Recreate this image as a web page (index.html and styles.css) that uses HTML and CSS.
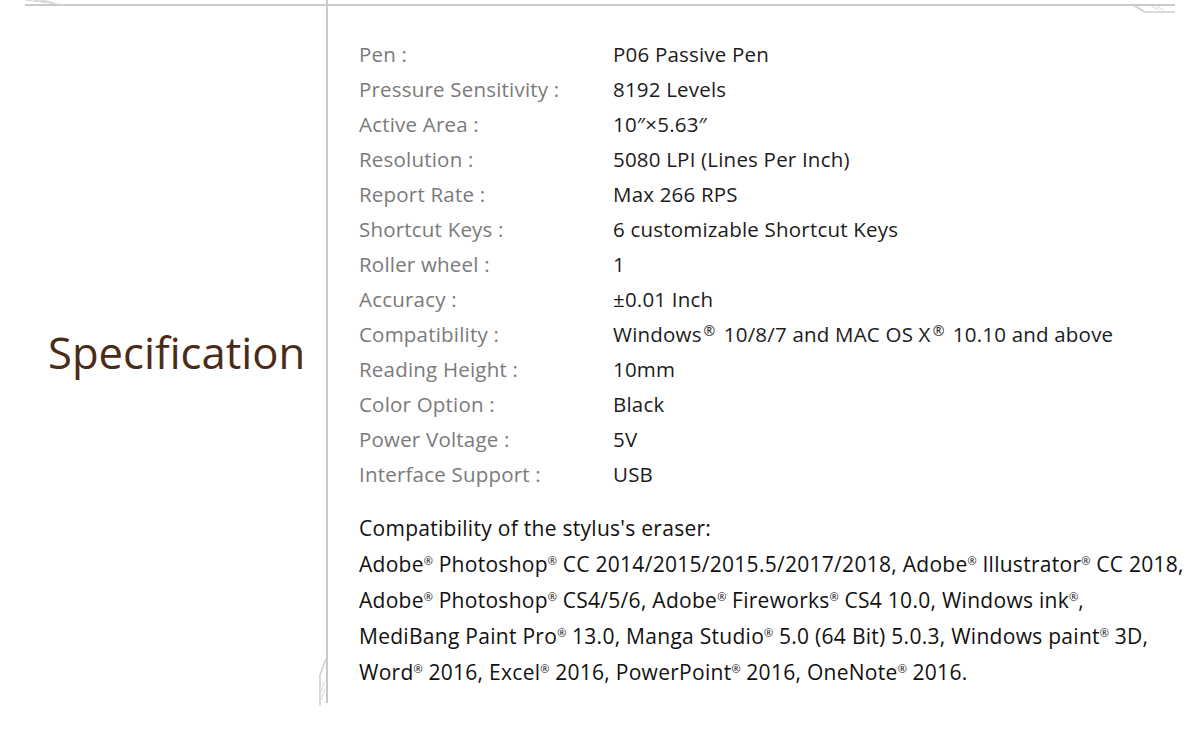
FILE: index.html
```html
<!DOCTYPE html>
<html lang="en">
<head>
<meta charset="utf-8">
<title>Specification</title>
<link rel="stylesheet" href="styles.css">
</head>
<body>
<div class="page">
  <div class="rule rule-left"></div>
  <div class="divider"></div>
  <div class="rule rule-right"></div>

  <div class="aside">
    <h1 class="title">Specification</h1>
  </div>

  <div class="content">
    <dl class="specs">
      <dt>Pen :</dt><dd>P06 Passive Pen</dd>
      <dt>Pressure Sensitivity :</dt><dd>8192 Levels</dd>
      <dt>Active Area :</dt><dd>10″×5.63″</dd>
      <dt>Resolution :</dt><dd>5080 LPI (Lines Per Inch)</dd>
      <dt>Report Rate :</dt><dd>Max 266 RPS</dd>
      <dt>Shortcut Keys :</dt><dd>6 customizable Shortcut Keys</dd>
      <dt>Roller wheel :</dt><dd>1</dd>
      <dt>Accuracy :</dt><dd>±0.01 Inch</dd>
      <dt>Compatibility :</dt><dd>Windows<sup class="reg-big">®</sup> 10/8/7 and MAC OS X<sup class="reg-big">®</sup> 10.10 and above</dd>
      <dt>Reading Height :</dt><dd>10mm</dd>
      <dt>Color Option :</dt><dd>Black</dd>
      <dt>Power Voltage :</dt><dd>5V</dd>
      <dt>Interface Support :</dt><dd>USB</dd>
    </dl>
    <p class="eraser">Compatibility of the stylus's eraser:<br>Adobe<sup class="reg">®</sup> Photoshop<sup class="reg">®</sup> CC 2014/2015/2015.5/2017/2018, Adobe<sup class="reg">®</sup> Illustrator<sup class="reg">®</sup> CC 2018,<br>Adobe<sup class="reg">®</sup> Photoshop<sup class="reg">®</sup> CS4/5/6, Adobe<sup class="reg">®</sup> Fireworks<sup class="reg">®</sup> CS4 10.0, Windows ink<sup class="reg">®</sup>,<br>MediBang Paint Pro<sup class="reg">®</sup> 13.0, Manga Studio<sup class="reg">®</sup> 5.0 (64 Bit) 5.0.3, Windows paint<sup class="reg">®</sup> 3D,<br>Word<sup class="reg">®</sup> 2016, Excel<sup class="reg">®</sup> 2016, PowerPoint<sup class="reg">®</sup> 2016, OneNote<sup class="reg">®</sup> 2016.</p>
  </div>

  <svg class="deco deco-tl" width="50" height="6" viewBox="0 0 50 6" aria-hidden="true">
    <path d="M4 0 L44 5 M12 0 L34 3 M18 0 L30 1.6" fill="none" stroke="#d6d6d6" stroke-width="1"/>
  </svg>
  <svg class="deco deco-tr" width="52" height="12" viewBox="0 0 52 12" aria-hidden="true">
    <path d="M5 1 L17 8 L47 8" fill="none" stroke="#cfcfcf" stroke-width="1.6"/>
    <path d="M22 1.5 L31 6 M27 1.5 L36 6" fill="none" stroke="#d6d6d6" stroke-width="1"/>
  </svg>
  <svg class="deco deco-bl" width="14" height="56" viewBox="0 0 14 56" aria-hidden="true">
    <path d="M6 56 V25 L12 9" fill="none" stroke="#cfcfcf" stroke-width="1.5"/>
    <path d="M7 42 L11 31 M7 50 L11 39" fill="none" stroke="#dadada" stroke-width="1"/>
  </svg>
</div>
</body>
</html>
```

FILE: styles.css
```css
html, body {
  margin: 0;
  padding: 0;
  background: #ffffff;
}

body {
  font-family: "Open Sans", "Liberation Sans", sans-serif;
}

.page {
  position: relative;
  width: 1200px;
  height: 730px;
  display: grid;
  grid-template-columns: 326px 2px 1fr;
  grid-template-rows: 4px 2px 697px;
}

.rule {
  grid-row: 2;
  background: #c9c9c9;
}

.rule-left {
  grid-column: 1;
  margin-left: 25px;
}

.rule-right {
  grid-column: 3;
  margin-right: 25px;
}

.divider {
  grid-column: 2;
  grid-row: 1 / 4;
  background: #c9c9c9;
}

.aside {
  grid-column: 1;
  grid-row: 3;
  display: flex;
  align-items: center;
  padding: 0 0 6px 48px;
}

.title {
  margin: 0;
  font-weight: 400;
  font-size: 43.6px;
  line-height: 60px;
  color: #4b2c17;
}

.content {
  grid-column: 3;
  grid-row: 3;
  padding: 31px 0 0 31px;
}

.specs {
  display: grid;
  grid-template-columns: 254px auto;
  margin: 0;
  font-size: 20.5px;
  letter-spacing: 0.2px;
  line-height: 35px;
}

.specs dt {
  color: #7a7a7a;
  white-space: nowrap;
}

.specs dd {
  margin: 0;
  color: #1c1c1c;
  white-space: nowrap;
}

.eraser {
  margin: 18px 0 0;
  font-size: 21px;
  letter-spacing: 0.28px;
  line-height: 36px;
  color: #111111;
  white-space: nowrap;
}

.reg {
  font-size: 11px;
  letter-spacing: 0;
  line-height: 1;
  vertical-align: 7px;
}

.reg-big {
  font-size: 14px;
  letter-spacing: 0;
  line-height: 1;
  vertical-align: 6px;
  padding: 0 3px 0 2px;
}

.deco {
  position: absolute;
  display: block;
}

.deco-tl {
  left: 21px;
  top: 0;
}

.deco-tr {
  left: 1128px;
  top: 4px;
}

.deco-bl {
  left: 314px;
  top: 650px;
}
```
